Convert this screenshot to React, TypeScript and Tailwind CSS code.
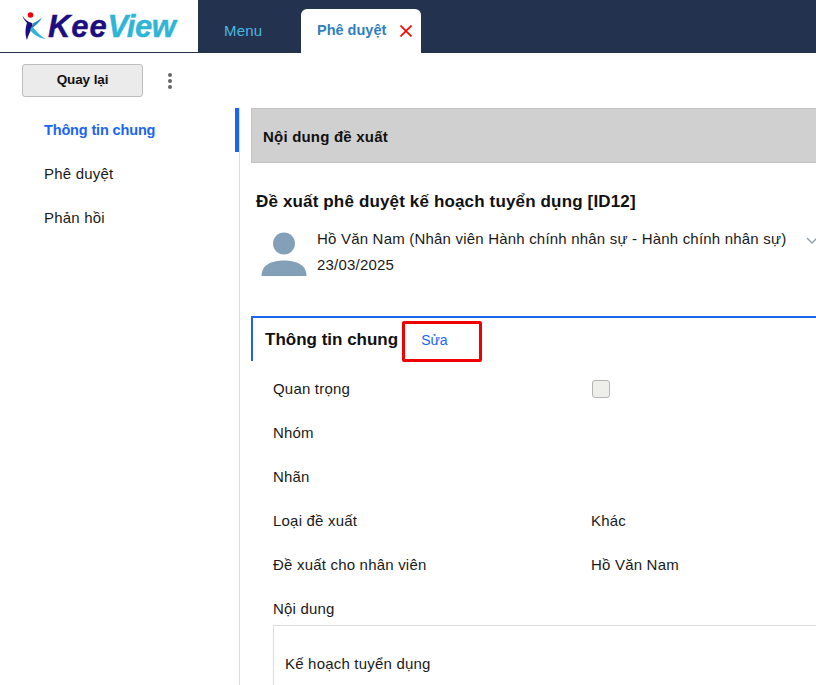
import React from "react";

const Row = ({ label, value, check }: { label: string; value?: string; check?: boolean }) => (
  <div className="flex h-[44px] items-center">
    <div className="w-[340px] pl-[22px]">{label}</div>
    {value && <div>{value}</div>}
    {check && <div className="ml-[1px] h-[18px] w-[18px] rounded-[3px] border border-[#b5b5b0] bg-[#eeeeea]" />}
  </div>
);

export default function App() {
  return (
    <div className="h-[685px] w-[816px] overflow-hidden bg-white font-['Liberation_Sans',Arial,sans-serif] text-[15px] tracking-[0.2px] text-[#1a1a1a]">
      <header className="flex h-[53px] border-b border-[#22324f]">
        <div className="flex w-[198px] items-center bg-white pl-[22px]">
          <svg width="24" height="28" viewBox="0 0 24 28" className="mt-[-1px] shrink-0">
            <circle cx="8.5" cy="3" r="2.8" fill="#f00010" />
            <path d="M0.5 3.5 C3 8 6 10 10 11 L11 15 C8 19 6 24 5 28 C3 24 3 16 5 11 C3 9 1 6 0.5 3.5Z" fill="#1d0e80" />
            <path d="M10.500 11.500 C14 10 17 8 20 5.500 C18 10 14 13 11 15.500Z" fill="#1f8fc0" />
            <path d="M10 14 C14 19 18 24 24 27 C17 26 12 23 8 18Z" fill="#2fb5d5" />
          </svg>
          <div className="ml-[2px] text-[31px] leading-none font-bold italic [-webkit-text-stroke:0.4px]">
            <span className="tracking-[0.9px] text-[#1d0e80]">Kee</span>
            <span className="tracking-[-0.4px] text-[#2fb5d5]">View</span>
          </div>
        </div>
        <nav className="flex flex-1 items-end bg-[#22324f]">
          <div className="mb-[-1px] flex h-[44px] w-[103px] items-center pl-[26px] text-[#4db8e0]">Menu</div>
          <div className="mb-[-1px] flex h-[44px] w-[120px] items-center rounded-t-[6px] bg-white pl-[16px] text-[14.5px] font-bold tracking-normal text-[#2d7fc1]">
            Phê duyệt
            <svg width="12" height="12" viewBox="0 0 12 12" className="ml-[14px]" fill="none" stroke="#ff0000" strokeWidth="1.6">
              <path d="M0.5 0.5 L11.5 11.5 M11.5 0.5 L0.5 11.5" />
            </svg>
          </div>
        </nav>
      </header>

      <div className="flex">
        <aside className="h-[632px] w-[240px] shrink-0">
          <div className="flex h-[55px] items-start pt-[11px] pl-[22px]">
            <button className="h-[33px] w-[121px] rounded-[3px] border border-[#bdbdbd] bg-[#ebebeb] text-[13.5px] font-bold tracking-[-0.1px] text-[#111]">
              Quay lại
            </button>
            <div className="mt-[9px] ml-[25px] flex flex-col gap-[2px]">
              <span className="h-[4px] w-[4px] rounded-full bg-[#666]" />
              <span className="h-[4px] w-[4px] rounded-full bg-[#666]" />
              <span className="h-[4px] w-[4px] rounded-full bg-[#666]" />
            </div>
          </div>
          <div className="h-[577px] border-r border-[#ddd]">
            <div className="flex h-[44px] items-center border-r-4 border-[#1a66f0] pt-[2px] pl-[44px] text-[14.5px] font-bold tracking-[-0.15px] text-[#1a66f0]">Thông tin chung</div>
            <div className="flex h-[44px] items-center pl-[44px]">Phê duyệt</div>
            <div className="flex h-[44px] items-center pl-[44px]">Phản hồi</div>
          </div>
        </aside>

        <main className="ml-[11px] w-[565px] shrink-0 pt-[55px]">
          <div className="flex h-[55px] items-center border border-r-0 border-[#c4c4c4] bg-[#d0d0d0] pt-[3px] pl-[11px] font-bold text-[#111]">
            Nội dung đề xuất
          </div>
          <div className="mt-[28px] pl-[5px] text-[17px] leading-[22px] font-bold tracking-[0.15px] text-[#111]">
            Đề xuất phê duyệt kế hoạch tuyển dụng [ID12]
          </div>
          <div className="mt-[13px] flex">
            <svg width="46" height="46" viewBox="0 0 46 46" className="mt-[5px] ml-[10px] shrink-0" fill="#84a0b8">
              <circle cx="23" cy="12.5" r="11" />
              <path d="M0.5 45 C0.5 34 10 29.500 23 29.500 C36 29.500 45.500 34 45.500 45Z" />
            </svg>
            <div className="ml-[10px] leading-[26px]">
              <div className="whitespace-nowrap">Hồ Văn Nam (Nhân viên Hành chính nhân sự - Hành chính nhân sự)</div>
              <div>23/03/2025</div>
            </div>
            <svg width="12" height="8" viewBox="0 0 12 8" className="mt-[11px] ml-[20px] shrink-0" fill="none" stroke="#8fa3b5" strokeWidth="1.5">
              <path d="M1 1 L6 6 L11 1" />
            </svg>
          </div>
          <section className="mt-[38px] border-t-2 border-[#1a66f0]">
            <div className="flex h-[43px] border-l-2 border-[#1a66f0]">
              <div className="flex items-center pl-[12px] text-[17px] font-bold tracking-normal text-[#111]">Thông tin chung</div>
              <div className="mt-[3px] ml-[4px] flex h-[41px] w-[80px] items-center rounded-[2px] border-[3px] border-[#f00000] pb-[2px] pl-[16px] text-[14px] tracking-normal text-[#1a66f0]">
                Sửa
              </div>
            </div>
            <div className="pt-[6px]">
              <Row label="Quan trọng" check />
              <Row label="Nhóm" />
              <Row label="Nhãn" />
              <Row label="Loại đề xuất" value="Khác" />
              <Row label="Đề xuất cho nhân viên" value="Hồ Văn Nam" />
              <Row label="Nội dung" />
            </div>
            <div className="mt-[-6px] ml-[22px] h-[80px] border border-r-0 border-[#ddd] pt-[27px] pl-[11px]">Kế hoạch tuyển dụng</div>
          </section>
        </main>
      </div>
    </div>
  );
}
